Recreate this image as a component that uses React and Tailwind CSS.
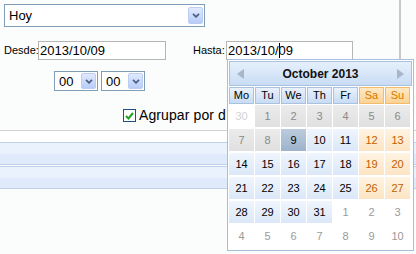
import React from "react";

const DropBtn = ({ h = "h-[16px]" }) => (
  <span className={`flex ${h} w-[15px] shrink-0 items-center justify-center rounded-[2px] border border-[#bccdf3] bg-linear-to-b from-[#e2eafd] to-[#b7ccf8]`}>
    <svg width="8" height="5" viewBox="0 0 8 5">
      <path d="M1 0.8 L4 3.8 L7 0.8" stroke="#4d6185" strokeWidth="1.8" fill="none" />
    </svg>
  </span>
);

const HourSelect = () => (
  <div className="flex h-[20px] w-[44px] items-center justify-between border border-[#7f9db9] bg-white pl-[4px] pr-[1px] text-[13px] leading-none">
    <span>00</span>
    <DropBtn h="h-[16px]" />
  </div>
);

const cellStyle = {
  out0: "text-[#d2d2d2]",
  out: "text-[#9a9a9a]",
  dis: "bg-linear-to-b from-[#ebebeb] to-[#e0e0e0] text-[#8a8a8a]",
  sel: "bg-linear-to-b from-[#bccbdd] to-[#9db3cc] text-black",
  n: "bg-linear-to-b from-[#eff5fd] to-[#dbe8f8] text-black",
  we: "bg-linear-to-b from-[#fef3e2] to-[#fce5c4] text-[#c25f00]",
};

const weeks = [
  [[30, "out0"], [1, "dis"], [2, "dis"], [3, "dis"], [4, "dis"], [5, "dis"], [6, "dis"]],
  [[7, "dis"], [8, "dis"], [9, "sel"], [10, "n"], [11, "n"], [12, "we"], [13, "we"]],
  [[14, "n"], [15, "n"], [16, "n"], [17, "n"], [18, "n"], [19, "we"], [20, "we"]],
  [[21, "n"], [22, "n"], [23, "n"], [24, "n"], [25, "n"], [26, "we"], [27, "we"]],
  [[28, "n"], [29, "n"], [30, "n"], [31, "n"], [1, "out"], [2, "out"], [3, "out"]],
  [[4, "out"], [5, "out"], [6, "out"], [7, "out"], [8, "out"], [9, "out"], [10, "out"]],
];

const dayNames = ["Mo", "Tu", "We", "Th", "Fr", "Sa", "Su"];

const Calendar = () => (
  <div className="absolute left-[227px] top-[59px] h-[192px] w-[187px] border border-[#a4bfdb] bg-white p-[1px]">
    <div className="flex h-[25px] items-center justify-between border border-[#a9c3de] bg-linear-to-b from-[#e6f0fc] to-[#c9dcf4] px-[7px]">
      <svg width="7" height="10" viewBox="0 0 7 10">
        <path d="M7 0 L0 5 L7 10 Z" fill="#a8b6c8" />
      </svg>
      <span className="text-[12px] font-bold text-[#111]">October 2013</span>
      <svg width="7" height="10" viewBox="0 0 7 10">
        <path d="M0 0 L7 5 L0 10 Z" fill="#a8b6c8" />
      </svg>
    </div>
    <div className="mt-[1px] grid grid-cols-[repeat(7,25px)] gap-x-[1px]">
      {dayNames.map((d, i) => (
        <div
          key={d}
          className={`flex h-[17px] items-center justify-center border text-[11px] ${
            i >= 5
              ? "border-[#f4bb6c] bg-linear-to-b from-[#fee9c6] to-[#fbd394] text-[#d97800]"
              : "border-[#a9c3de] bg-linear-to-b from-[#e9f1fc] to-[#c9dcf4] text-black"
          }`}
        >
          {d}
        </div>
      ))}
    </div>
    <div className="mt-[1px] grid grid-cols-[repeat(7,25px)] gap-x-[1px] gap-y-[2px]">
      {weeks.flat().map(([d, t], i) => (
        <div key={i} className={`flex h-[22px] items-center justify-center text-[11px] ${cellStyle[t]}`}>
          {d}
        </div>
      ))}
    </div>
  </div>
);

export default function App() {
  return (
    <div className="relative h-[254px] w-[416px] overflow-hidden bg-[#fbfdfc] font-['Liberation_Sans',Arial,sans-serif] text-black">
      <div className="h-[130px] w-[401px] border-r-2 border-[#c8c8c8] pl-[4px] pt-[4px]">
        <div className="flex h-[23px] w-[201px] items-center justify-between border border-[#7f9db9] bg-white pl-[4px] pr-[1px] text-[13px]">
          <span>Hoy</span>
          <DropBtn h="h-[17px]" />
        </div>
        <div className="mt-[14px] flex items-center text-[11px]">
          <span className="w-[34px]">Desde:</span>
          <div className="flex h-[19px] w-[128px] items-center border border-[#b5b5b5] bg-white pl-[1px] text-[13px]">
            2013/10/09
          </div>
          <span className="ml-[27px] w-[33px]">Hasta:</span>
          <div className="flex h-[19px] w-[127px] items-center border border-[#b5b5b5] bg-white pl-[1px] text-[13px]">
            2013/10/
            <span className="-mr-[1px] inline-block h-[15px] w-[1px] bg-black" />
            09
          </div>
        </div>
        <div className="ml-[50px] mt-[11px] flex gap-[3px]">
          <HourSelect />
          <HourSelect />
        </div>
        <div className="ml-[119px] mt-[14px] flex items-center gap-[3px] text-[14px] tracking-[0.1px]">
          <span className="flex h-[13px] w-[13px] shrink-0 items-center justify-center border border-[#1c5180] bg-white">
            <svg width="9" height="8" viewBox="0 0 9 8">
              <path d="M1 4 L3.5 6.5 L8 1" stroke="#21a121" strokeWidth="2" fill="none" />
            </svg>
          </span>
          <span className="whitespace-nowrap">Agrupar por día</span>
        </div>
      </div>
      <div className="h-[12px] border-t border-[#d3d3d3] bg-white" />
      <div className="border-y border-[#bdd2e8]">
        <div className="h-[11px] bg-[#e9f2fd]" />
        <div className="h-[10px] bg-[#dfebfa]" />
      </div>
      <div className="h-[1px] bg-white" />
      <div className="border-y border-[#bdd2e8]">
        <div className="h-[11px] bg-[#e9f2fd]" />
        <div className="h-[10px] bg-[#dfebfa]" />
      </div>
      <Calendar />
    </div>
  );
}
